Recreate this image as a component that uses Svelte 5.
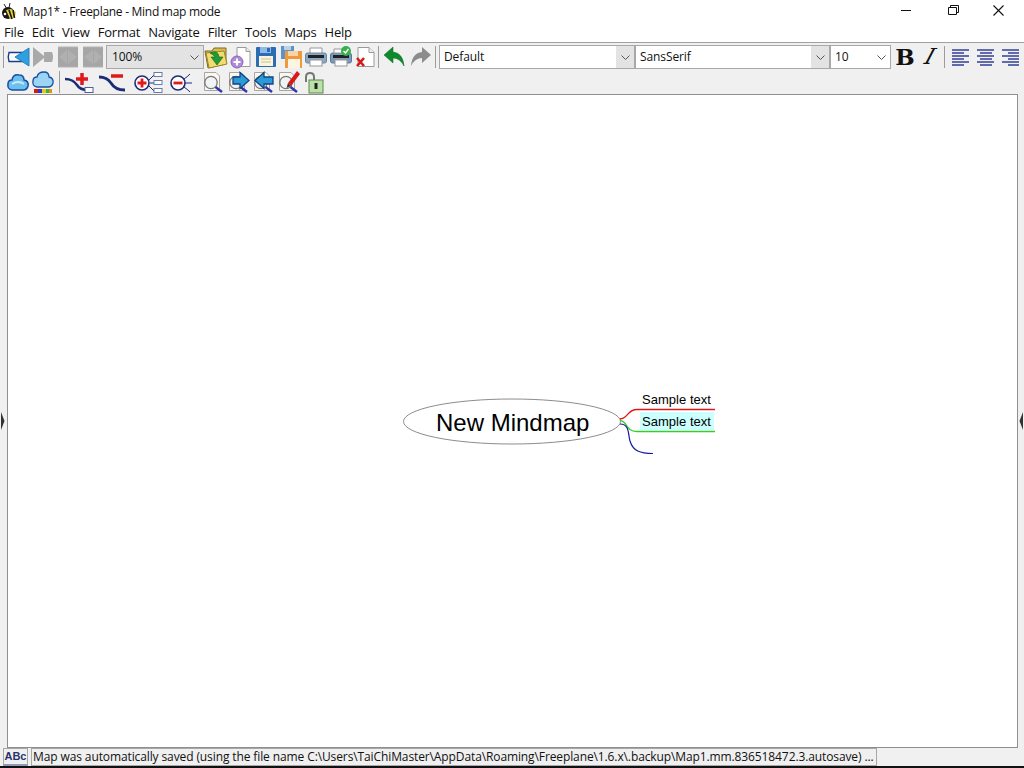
<script>
  const menus = ["File","Edit","View","Format","Navigate","Filter","Tools","Maps","Help"];
  const status = "Map was automatically saved (using the file name C:\\Users\\TaiChiMaster\\AppData\\Roaming\\Freeplane\\1.6.x\\.backup\\Map1.mm.836518472.3.autosave) ...";
</script>

{#snippet chev()}
  <svg class="chev" width="9" height="5" viewBox="0 0 9 5"><path d="M.5.5 4.5 4.5 8.5.5" fill="none" stroke="#555" stroke-width="1"/></svg>
{/snippet}

{#snippet page(extra)}
  <path d="M4 2.5H15L20 7.5V21.500H4Z" fill="#fff" stroke="#9a9a9a"/><path d="M15 2.5V7.5H20" fill="#eee" stroke="#9a9a9a"/>
  {@render extra?.()}
{/snippet}

{#snippet lens()}
  <path d="M3.500 2.500H15L18.500 6V20.500H3.500Z" fill="#fbf8ee" stroke="#a6a6a6"/>
  <circle cx="10" cy="12.500" r="6.200" fill="#eef3f6" fill-opacity=".75" stroke="#777" stroke-width="1.300"/>
  <path d="M14.500 17 21 22" stroke="#3434b0" stroke-width="2.400"/>
{/snippet}

{#snippet align(kind)}
  <svg class="ic al" viewBox="0 0 24 24">
    {#each [5,8,11,14,17,20] as y, i}
      {@const short = i % 2 === 1}
      {@const x1 = short && kind === 'r' ? 9 : short && kind === 'c' ? 6 : 3}
      {@const x2 = short && kind === 'l' ? 15 : short && kind === 'c' ? 18 : 20}
      <path d="M{x1} {y}H{x2}" stroke="#3d4a9c" stroke-width="1.6"/>
    {/each}
  </svg>
{/snippet}

<div class="win">
  <header class="title">
    <svg class="bee" width="17" height="17" viewBox="0 0 17 17">
      <path d="M3 1 6 6M9 0 8 5" stroke="#222" stroke-width="1"/>
      <ellipse cx="7" cy="10" rx="6" ry="6" fill="#161616"/>
      <path d="M5 7 10 6 15 9 14 14 9 16Z" fill="#e8d23c"/>
      <path d="M8 7 11 16M12 7 13.5 15" stroke="#161616" stroke-width="1.6"/>
      <circle cx="4" cy="11" r="1.3" fill="#fff"/>
    </svg>
    <span class="ttext">Map1* - Freeplane - Mind map mode</span>
    <div class="winbtns">
      <svg width="46" height="22" viewBox="0 0 46 22"><path d="M17 10.5H27" stroke="#111"/></svg>
      <svg width="46" height="22" viewBox="0 0 46 22"><path d="M18.5 7.5H26.5V14.5H18.5ZM20.5 7.5V5.5H28.5V12.5H26.5" fill="none" stroke="#111"/></svg>
      <svg width="46" height="22" viewBox="0 0 46 22"><path d="M17.5 5.5 27.5 15.5M27.5 5.5 17.5 15.5" stroke="#111" stroke-width="1.1"/></svg>
    </div>
  </header>

  <nav class="menu">
    {#each menus as m}<span>{m}</span>{/each}
  </nav>

  <section class="toolbar">
    <div class="row r1">
      <i class="sep"></i>
      <svg class="ic first" viewBox="0 0 24 24">
        <path d="M3 7.5H16V16.5H3Q1.5 12 3 7.5Z" fill="#fff" stroke="#143f8a" stroke-width="1.4"/>
        <path d="M9 12 23 3V21Z" fill="#2f9fe0" stroke="#2a7fc0"/>
      </svg>
      <svg class="ic" viewBox="0 0 24 24"><path d="M2 2 13 11V7H21Q23 12 21 17H13V13L2 22Z" fill="#a9a9a9"/></svg>
      <svg class="ic" viewBox="0 0 24 24"><rect x="2" y="2" width="20" height="20" fill="#a6a6a6"/><path d="M3 12 11 5V19ZM12 5 21 12 12 19" fill="#b0b0b0"/><path d="M2 2H22M2 22H22" stroke="#b4b4b4"/></svg>
      <svg class="ic" viewBox="0 0 24 24"><rect x="2" y="2" width="20" height="20" fill="#a6a6a6"/><path d="M21 12 13 5V19ZM12 5 3 12 12 19" fill="#b0b0b0"/><path d="M2 2H22M2 22H22" stroke="#b4b4b4"/></svg>
      <div class="combo zoom"><span>100%</span><b>{@render chev()}</b></div>
      <svg class="ic" viewBox="0 0 24 24">
        <path d="M1 6H8L10 3H22V19L4 23Z" fill="#d8bd55" stroke="#7a6a20"/>
        <path d="M2 8 20 6 23 19 5 23Z" fill="#f2dc72" stroke="#9a8628"/>
        <path d="M6 8Q14 4 15 12H19L13 20 7 12H11Q10 10 6 8Z" fill="#1f9a34" stroke="#0e6a1f" stroke-width=".6"/>
      </svg>
      <svg class="ic" viewBox="0 0 24 24"><path d="M8 2.500H17L21 6.500V21.500H8Z" fill="#fff" stroke="#9a9a9a"/><path d="M17 2.500V6.500H21" fill="#eee" stroke="#9a9a9a"/><circle cx="8" cy="17" r="6" fill="#b08ad8" stroke="#8a64b8"/><path d="M8 13.500V20.500M4.500 17H11.500" stroke="#fff" stroke-width="2"/></svg>
      <svg class="ic" viewBox="0 0 24 24"><rect x="2" y="2" width="20" height="20" rx="1" fill="#2c6cb4"/><rect x="6" y="2" width="11" height="6" fill="#8fbce4"/><rect x="13" y="3" width="3" height="4" fill="#2c6cb4"/><rect x="5" y="11" width="14" height="10" fill="#faf4d8"/><path d="M7 14H17M7 17H17" stroke="#c8c0a0"/></svg>
      <svg class="ic" viewBox="0 0 24 24"><rect x="2" y="1" width="13" height="13" fill="#5a94c8"/><rect x="5" y="1" width="7" height="4" fill="#b8d4ea"/><rect x="6" y="6" width="17" height="17" fill="#ee9a3c"/><rect x="9" y="6" width="10" height="5" fill="#f8d4a4"/><rect x="9" y="14" width="12" height="9" fill="#fdf4e4"/></svg>
      <svg class="ic" viewBox="0 0 24 24"><path d="M6 3H18V9H6Z" fill="#fff" stroke="#999"/><rect x="1.500" y="8" width="21" height="10" rx="2" fill="#8aa8c4" stroke="#6a88a4"/><rect x="4" y="10" width="16" height="3" fill="#222"/><rect x="6" y="15" width="12" height="6" fill="#fff" stroke="#999"/></svg>
      <svg class="ic" viewBox="0 0 24 24"><rect x="1.500" y="8" width="21" height="10" rx="2" fill="#7a9ab8" stroke="#5a7a98"/><rect x="4" y="10" width="16" height="3" fill="#222"/><rect x="6" y="15" width="12" height="6" fill="#fff" stroke="#999"/><path d="M5 4H13V8H5Z" fill="#fff" stroke="#999"/><circle cx="17" cy="6" r="5" fill="#35b04a"/><path d="M14.500 6 16.500 8 19.500 4" fill="none" stroke="#fff" stroke-width="1.400"/></svg>
      <svg class="ic" viewBox="0 0 24 24">
        {#snippet closeX()}<path d="M3 13 10 21M10 13 3 21" stroke="#d61a1a" stroke-width="2.600"/>{/snippet}
        {@render page(closeX)}
      </svg>
      <i class="sep s2"></i>
      <svg class="ic undo" viewBox="0 0 24 24"><path d="M1 10 10 2V7Q20 8 21 21 17 13 10 13V18Z" fill="#0e8a2c" stroke="#0a6a20" stroke-width=".5"/></svg>
      <svg class="ic" viewBox="0 0 24 24"><path d="M23 10 14 2V7Q4 8 3 21 7 13 14 13V18Z" fill="#8c8c8c"/></svg>
      <i class="sep s3"></i>
      <div class="combo style"><span>Default</span><b>{@render chev()}</b></div>
      <div class="combo font"><span>SansSerif</span><b>{@render chev()}</b></div>
      <div class="combo size"><span>10</span><b class="plain">{@render chev()}</b></div>
      <span class="bold">B</span>
      <span class="ital">I</span>
      <i class="sep s4"></i>
      {@render align('l')}
      {@render align('c')}
      {@render align('r')}
    </div>

    <div class="row r2">
      <svg class="ic first" viewBox="0 0 24 24"><path d="M6 20Q1 19 2 14 2 10 6 10 7 4 13 5 18 5 18 10 23 11 22 16 21 20 17 20Z" fill="#6cc0f0" stroke="#1a4fa0" stroke-width="1.500"/><path d="M6 14Q12 10 18 14" stroke="#cdeafa" stroke-width="2" fill="none"/></svg>
      <svg class="ic" viewBox="0 0 24 24"><path d="M6 17Q1 16 2 11 2 7 6 7 7 2 13 2 18 2 18 7 23 8 22 13 21 17 17 17Z" fill="#9cd4f4" stroke="#1a4fa0" stroke-width="1.300"/>
        <rect x="3" y="19" width="4" height="4" fill="#d81818"/><rect x="7" y="19" width="4" height="4" fill="#3434c8"/><rect x="11" y="19" width="4" height="4" fill="#e8c818"/><rect x="15" y="19" width="3" height="4" fill="#38b838"/><rect x="18" y="19" width="3" height="4" fill="#e89018"/></svg>
      <i class="sep s5"></i>
      <svg class="ic wide" viewBox="0 0 30 24"><path d="M1 9Q9 9 13 15 16 20 24 20" fill="none" stroke="#1c2d78" stroke-width="2.500"/><path d="M18 3V15M12 9H24" stroke="#e01a1a" stroke-width="3.500"/><rect x="21" y="17.500" width="8" height="5" fill="#fff" stroke="#4a60a0"/></svg>
      <svg class="ic wide w2" viewBox="0 0 30 24"><path d="M1 7Q9 7 13 13 17 20 27 20" fill="none" stroke="#1c2d78" stroke-width="2.800"/><path d="M13 6H25" stroke="#e01a1a" stroke-width="3.500"/></svg>
      <svg class="ic wide w3" viewBox="0 0 30 24"><circle cx="9" cy="13" r="7" fill="#fff" stroke="#1c2d78" stroke-width="1.600"/><path d="M9 8.500V17.500M4.500 13H13.500" stroke="#e01a1a" stroke-width="2.800"/><path d="M16 10 21 5M17 13H21M16 16 21 21" stroke="#1c2d78"/><rect x="21" y="2.500" width="8" height="4" fill="#fff" stroke="#6a7ab0"/><rect x="21" y="10.500" width="8" height="4" fill="#fff" stroke="#6a7ab0"/><rect x="21" y="18.500" width="8" height="4" fill="#fff" stroke="#6a7ab0"/></svg>
      <svg class="ic mid" viewBox="0 0 26 24"><circle cx="9" cy="13" r="7" fill="#fff" stroke="#1c2d78" stroke-width="1.600"/><path d="M4.500 13H13.500" stroke="#e01a1a" stroke-width="2.800"/><path d="M15 9Q18 7 21 4M16 13H23M15 17Q18 19 21 22" stroke="#1c2d78" fill="none"/></svg>
      <svg class="ic" viewBox="0 0 24 24">{@render lens()}</svg>
      <svg class="ic" viewBox="0 0 24 24">{@render lens()}<path d="M7 7H14V2.500L23 10.500 14 18.500V14H7Z" fill="#2a9ad8" stroke="#15437e" stroke-width="1.300"/></svg>
      <svg class="ic" viewBox="0 0 24 24">{@render lens()}<path d="M22 7H13V2.500L4 10.500 13 18.500V14H22Z" fill="#2a9ad8" stroke="#15437e" stroke-width="1.300"/></svg>
      <svg class="ic" viewBox="0 0 24 24">{@render lens()}<path d="M12 13 21 1 24 4 15 16Z" fill="#d81a1a"/><path d="M12 13 10.500 18 15 16Z" fill="#4a3020"/></svg>
      <svg class="ic" viewBox="0 0 24 24"><path d="M5 12V7Q5 3 9 3 13 3 13 7V10" fill="none" stroke="#777" stroke-width="2"/><rect x="8" y="10" width="14" height="13" fill="#bde0a8" stroke="#5c8a48"/><rect x="13.500" y="13" width="3" height="6" fill="#222"/></svg>
    </div>
  </section>

  <div class="mid-area">
    <div class="handle"><svg width="5" height="20" viewBox="0 0 5 20"><path d="M1 1 4.500 10 1 19Z" fill="#333"/></svg></div>
    <main class="canvas">
      <svg class="edges" width="1010" height="654" viewBox="7 94 1010 654">
        <ellipse cx="512" cy="421.500" rx="108.500" ry="22.500" fill="#fff" stroke="#8c8c8c"/>
        <rect x="640" y="412" width="74" height="18" fill="#ccffff"/>
        <path d="M620 419C628 419 627 409.500 637 409.500H715" fill="none" stroke="#e01818" stroke-width="1.300"/>
        <path d="M620 420.500C628 421 625 431.500 637 431.500H715" fill="none" stroke="#2fd02f" stroke-width="1.300"/>
        <path d="M620 424C630 424 628 435 630 441 633 451 640 453.500 653 453.500" fill="none" stroke="#1a1aa8" stroke-width="1.200"/>
      </svg>
      <span class="root">New Mindmap</span>
      <span class="leaf a">Sample text</span>
      <span class="leaf b">Sample text</span>
    </main>
    <div class="handle right"><svg width="5" height="20" viewBox="0 0 5 20"><path d="M4 1 .5 10 4 19Z" fill="#333"/></svg></div>
  </div>

  <footer class="status">
    <span class="abc">ABc</span>
    <span class="msg">{status}</span>
  </footer>
  <div class="taskbar"></div>
</div>

<style>
  :global(body) { margin: 0; background: #f0f0f0; }
  .win { width: 1024px; height: 768px; display: flex; flex-direction: column; overflow: hidden; background: #f0f0f0; font-family: "Open Sans", "Noto Sans", sans-serif; color: #111; }
  .title { height: 22px; flex: none; display: flex; align-items: center; background: #fff; font-size: 12px; }
  .bee { margin: 1px 0 0 1px; flex: none; }
  .ttext { margin-left: 5px; letter-spacing: -.28px; }
  .winbtns { margin-left: auto; display: flex; margin-right: 2px; }
  .winbtns svg { display: block; }
  .menu { height: 20px; flex: none; display: flex; align-items: center; gap: 8px; padding-left: 4px; background: #fff; font-size: 13px; letter-spacing: -.2px; }
  .toolbar { height: 52px; flex: none; box-sizing: border-box; border-top: 1px solid #a0a0a0; padding-top: 2px; display: flex; flex-direction: column; }
  .row { height: 24px; display: flex; align-items: center; flex: none; }
  .r1 { padding-left: 3px; }
  .r2 { height: 24px; margin-top: 1px; }
  .ic { width: 24px; height: 24px; flex: none; margin-right: 1px; display: block; }
  .first { margin-left: 2px; }
  .r2 .first { margin-left: 6px; }
  .wide { width: 30px; margin-right: 4px; }
  .w2 { margin-right: 5px; }
  .w3 { margin-right: 6px; }
  .mid { width: 26px; margin-right: 6px; }
  .sep { width: 1px; height: 22px; background: #9c9c9c; flex: none; }
  .s2 { margin: 0 4px 0 -1px; }
  .s3 { margin: 0 3px 0 2px; }
  .s4 { margin: 0 4px 0 2px; }
  .s5 { margin: 0 4px 0 3px; }
  .combo { box-sizing: border-box; height: 24px; display: flex; align-items: stretch; border: 1px solid #a8a8a8; background: #fff; font-size: 12px; flex: none; }
  .combo span { flex: 1; padding-left: 4px; line-height: 22px; letter-spacing: -.1px; }
  .combo b { width: 18px; background: #e3e3e3; display: flex; align-items: center; justify-content: center; }
  .combo b.plain { background: #fff; }
  .chev { display: block; }
  .zoom { width: 98px; background: #e3e3e3; }
  .zoom span { padding-left: 5px; }
  .style { width: 196px; }
  .font { width: 195px; }
  .size { width: 61px; }
  .bold { width: 26px; margin-left: 1px; text-align: center; font: bold 23px/24px "DejaVu Serif", serif; color: #111; }
  .ital { width: 24px; text-align: center; font: italic 22px/24px "DejaVu Serif", serif; color: #111; transform: skewX(-18deg); }
  .mid-area { flex: 1; display: flex; min-height: 0; }
  .handle { width: 7px; flex: none; display: flex; align-items: center; justify-content: flex-start; }
  .handle.right { width: 6px; justify-content: flex-end; }
  .canvas { position: relative; flex: 1; box-sizing: border-box; background: #fff; border: 1px solid #8f8f8f; }
  .edges { position: absolute; left: -1px; top: -1px; display: block; }
  .root { position: absolute; left: 428px; top: 313px; font: 24px/30px "Liberation Sans", sans-serif; color: #000; white-space: nowrap; }
  .leaf { position: absolute; left: 634px; font: 13px/16px "Liberation Sans", sans-serif; color: #000; white-space: nowrap; letter-spacing: .03px; }
  .leaf.a { top: 297px; }
  .leaf.b { top: 319px; }
  .status { height: 18px; flex: none; display: flex; align-items: stretch; padding-left: 3px; font-size: 12px; }
  .abc { box-sizing: border-box; width: 25px; border: 1px solid #a8a8a8; border-bottom: 2px solid #8f9ab8; text-align: center; font: bold 11px/15px "Liberation Sans", sans-serif; color: #26346e; }
  .msg { box-sizing: border-box; margin-left: 3px; width: 846px; padding-left: 1px; border: 1px solid #a8a8a8; white-space: nowrap; overflow: hidden; line-height: 16px; font-size: 12px; letter-spacing: -.11px; }
  .taskbar { height: 2px; flex: none; background: #111; }
</style>
